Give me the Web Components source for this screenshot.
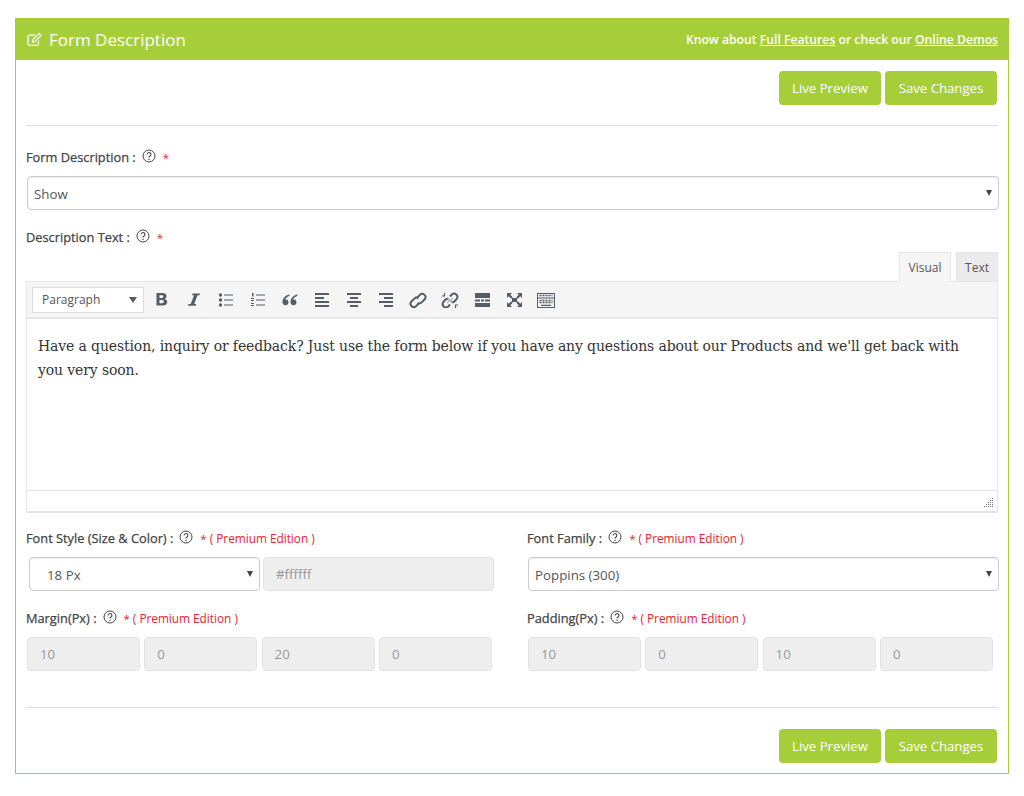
<!DOCTYPE html>
<html>
<head>
<meta charset="utf-8">
<title>Form Description</title>
<style>
  body { margin: 18px 15px 0; background: #fff; font-family: "Open Sans", sans-serif; }
</style>
</head>
<body>
<form-panel>
  <svg slot="icon" width="15" height="15" viewBox="0 0 15 15" fill="none" stroke="#fff" stroke-width="1.3"><path d="M11.500 8.500v3.200a1.600 1.600 0 0 1-1.600 1.600H2.600A1.600 1.600 0 0 1 1 11.700V4.800a1.600 1.600 0 0 1 1.600-1.600H8"/><path d="M5.500 10.200l.5-2.600L12 1.600l2 2-6 6z" stroke-width="1.100"/></svg>
  <span slot="title">Form Description</span>
  <span slot="links">Know about <a>Full Features</a> or check our <a>Online Demos</a></span>

  <action-bar></action-bar>
  <hr-line style="margin-top:20px"></hr-line>

  <field-label style="margin-top:22px" required>Form Description :</field-label>
  <select-box style="margin:10px -1px 0 1px;height:34px" value="Show"></select-box>

  <field-label style="margin-top:18px" required>Description Text :</field-label>
  <wp-editor style="margin-top:6px">Have a question, inquiry or feedback? Just use the form below if you have any questions about our Products and we'll get back with you very soon.</wp-editor>

  <two-cols style="margin-top:16px">
    <div slot="left">
      <field-label required premium>Font Style (Size &amp; Color) :</field-label>
      <input-row style="margin:10px 0 0 3px;grid-template-columns:231px 231px;column-gap:3px">
        <select-box value="18 Px" indent="17"></select-box>
        <text-box value="#ffffff"></text-box>
      </input-row>
      <field-label style="margin-top:18px" required premium>Margin(Px) :</field-label>
      <input-row style="margin:10px 0 0 1px;grid-template-columns:repeat(4, 113px)">
        <text-box value="10"></text-box><text-box value="0"></text-box><text-box value="20"></text-box><text-box value="0"></text-box>
      </input-row>
    </div>
    <div slot="right">
      <field-label required premium>Font Family :</field-label>
      <input-row style="margin:10px -1px 0 1px;grid-template-columns:1fr">
        <select-box value="Poppins (300)"></select-box>
      </input-row>
      <field-label style="margin-top:18px" required premium>Padding(Px) :</field-label>
      <input-row style="margin:10px 0 0 1px;grid-template-columns:repeat(4, 113px)">
        <text-box value="10"></text-box><text-box value="0"></text-box><text-box value="10"></text-box><text-box value="0"></text-box>
      </input-row>
    </div>
  </two-cols>

  <hr-line style="margin-top:36px"></hr-line>
  <action-bar style="margin-top:21px"></action-bar>
</form-panel>

<script>
class FormPanel extends HTMLElement {
  constructor() {
    super();
    this.attachShadow({ mode: 'open' });
    this.shadowRoot.innerHTML = `
      <style>
        :host { display: block; width: 994px; box-sizing: border-box; border: 1px solid #a6ce39; border-top: 0; height: 756px; color: #444; }
        header { height: 42px; margin: 0 -1px; background: #a6ce39; color: #fff; display: flex; align-items: center; padding: 0 11px 0 12px; }
        .icon { display: flex; margin-right: 7px; }
        .title { font-size: 17px; flex: 1; }
        .links { font-size: 12.2px; font-weight: 600; }
        ::slotted(span[slot="links"]) { display: block; }
        main { padding: 11px 10px 0; }
      </style>
      <header>
        <span class="icon"><slot name="icon"></slot></span>
        <span class="title"><slot name="title"></slot></span>
        <span class="links"><slot name="links"></slot></span>
      </header>
      <main><slot></slot></main>`;
  }
}

class ActionBar extends HTMLElement {
  constructor() {
    super();
    this.attachShadow({ mode: 'open' });
    this.shadowRoot.innerHTML = `
      <style>
        :host { display: flex; justify-content: flex-end; gap: 4px; padding-right: 1px; }
        button { height: 34px; border: 0; border-radius: 4px; background: #a6ce39; color: #fff; font: 13.2px "Open Sans", sans-serif; padding: 0; }
        .preview { width: 102px; }
        .save { width: 112px; }
      </style>
      <button class="preview">Live Preview</button>
      <button class="save">Save Changes</button>`;
  }
}

class HrLine extends HTMLElement {
  constructor() {
    super();
    this.attachShadow({ mode: 'open' });
    this.shadowRoot.innerHTML = `<style>:host { display: block; height: 1px; background: #ddd; }</style>`;
  }
}

class FieldLabel extends HTMLElement {
  constructor() {
    super();
    this.attachShadow({ mode: 'open' });
    const star = this.hasAttribute('required') ? '<span class="star">*</span>' : '';
    const premium = this.hasAttribute('premium') ? '<span class="premium">( Premium Edition )</span>' : '';
    this.shadowRoot.innerHTML = `
      <style>
        :host { display: flex; align-items: center; height: 18px; font-size: 12.8px; color: #444; white-space: nowrap; }
        .text { -webkit-text-stroke: .25px #444; }
        svg { margin: -2px 0 0 6px; }
        .star { color: #e8212e; margin-left: 7px; font-size: 11.5px; }
        .premium { color: #e8212e; margin-left: 3px; font-size: 11.8px; }
      </style>
      <span class="text"><slot></slot></span>
      <svg width="14" height="14" viewBox="0 0 14 14" fill="none" stroke="#444"><circle cx="7" cy="7" r="6"/><path d="M5.100 5.500a1.900 1.900 0 1 1 2.900 1.600c-.7.4-1 .7-1 1.500" stroke-width="1.100"/><path d="M7 9.700v1.200" stroke-width="1.200"/></svg>
      ${star}${premium}`;
  }
}

class SelectBox extends HTMLElement {
  constructor() {
    super();
    this.attachShadow({ mode: 'open' });
    const indent = this.getAttribute('indent') || 6;
    this.shadowRoot.innerHTML = `
      <style>
        :host { display: flex; align-items: center; box-sizing: border-box; height: 34px; background: #fff; border: 1px solid #ccc; border-radius: 4px; box-shadow: inset 0 1px 1px rgba(0,0,0,.075); font-size: 13.3px; color: #555; }
        .val { padding: 1px 0 0 ${indent}px; flex: 1; }
        i { width: 0; height: 0; border: 3.500px solid transparent; border-top: 6px solid #444; border-bottom: 0; margin-right: 6px; }
      </style>
      <span class="val">${this.getAttribute('value')}</span><i></i>`;
  }
}

class TextBox extends HTMLElement {
  constructor() {
    super();
    this.attachShadow({ mode: 'open' });
    this.shadowRoot.innerHTML = `
      <style>
        :host { display: flex; align-items: center; box-sizing: border-box; height: 34px; background: #eee; border: 1px solid #e3e3e3; border-radius: 4px; font-size: 13.3px; color: #999; padding-left: 12px; }
      </style>
      ${this.getAttribute('value')}`;
  }
}

class InputRow extends HTMLElement {
  constructor() {
    super();
    this.attachShadow({ mode: 'open' });
    this.shadowRoot.innerHTML = `<style>:host { display: grid; column-gap: 4.300px; }</style><slot></slot>`;
  }
}

class TwoCols extends HTMLElement {
  constructor() {
    super();
    this.attachShadow({ mode: 'open' });
    this.shadowRoot.innerHTML = `
      <style>
        :host { display: grid; grid-template-columns: 501px 471px; }
      </style>
      <slot name="left"></slot><slot name="right"></slot>`;
  }
}

const C = '#555d66';
const ICONS = [
  ['B', 16, `<path d="M2.500 1h6c2.600 0 4 1.200 4 3.200 0 1.300-.7 2.300-1.900 2.700 1.600.3 2.600 1.500 2.600 3.100 0 2.300-1.600 3.500-4.200 3.500H2.500zM5.500 3.300v2.700h2.300c1 0 1.500-.5 1.500-1.400 0-.8-.5-1.300-1.500-1.300zM5.500 8.100v3.100h2.600c1.100 0 1.700-.5 1.700-1.600 0-1-.6-1.500-1.700-1.500z" fill="${C}" fill-rule="evenodd"/>`],
  ['I', 16, `<path d="M6.500 1.500h7.500l-.5 1.800h-2L8.200 12h2l-.5 1.800H2l.5-1.800h2.200l3.300-8.700H6z" fill="${C}"/>`],
  ['ul', 16, `<g fill="${C}"><circle cx="2.500" cy="3" r="1.700"/><circle cx="2.500" cy="8" r="1.700"/><circle cx="2.500" cy="13" r="1.700"/></g><path d="M6 3h9M6 8h9M6 13h9" stroke="${C}"/>`],
  ['ol', 16, `<g fill="${C}"><rect x="2" y="1" width="1.500" height="3.500"/><rect x="1" y="6" width="3" height="1"/><rect x="1" y="8" width="3" height="1"/><rect x="1" y="11" width="3" height="1"/><rect x="1" y="13" width="3" height="1"/></g><path d="M6 3h9M6 8h9M6 13h9" stroke="${C}"/>`],
  ['quote', 16, `<path d="M7.500 2.200C4 3.200.5 5.800.5 9.800c0 2 1.100 3.400 3 3.400 1.700 0 3-1.200 3-3 0-1.600-1.100-2.800-2.700-2.800-.3 0-.5 0-.7.1.4-1.500 2.200-3 4.400-3.800zM15.500 2.200c-3.500 1-7 3.600-7 7.600 0 2 1.100 3.400 3 3.400 1.700 0 3-1.200 3-3 0-1.600-1.100-2.800-2.700-2.800-.3 0-.5 0-.7.1.4-1.500 2.200-3 4.400-3.800z" fill="${C}"/>`],
  ['left', 16, `<path d="M1 1h14v2H1zM1 5h9v2H1zM1 9h14v2H1zM1 13h14v2H1z" fill="${C}"/>`],
  ['center', 16, `<path d="M1 1h14v2H1zM4 5h8v2H4zM1 9h14v2H1zM4 13h8v2H4z" fill="${C}"/>`],
  ['right', 16, `<path d="M1 1h14v2H1zM6 5h9v2H6zM1 9h14v2H1zM6 13h9v2H6z" fill="${C}"/>`],
  ['link', 18, `<g fill="none" stroke="${C}" stroke-width="2"><path d="M8 6l3-3.300a3.300 3.300 0 0 1 4.700 4.600l-3 3.100a3.300 3.300 0 0 1-4 .5"/><path d="M10 11l-3 3.300a3.300 3.300 0 0 1-4.700-4.600l3-3.100a3.300 3.300 0 0 1 4-.5"/></g>`],
  ['unlink', 18, `<g fill="none" stroke="${C}" stroke-width="2"><path d="M9 4.500l1.800-2a3.300 3.300 0 0 1 4.800 4.500l-2 2.300a3.300 3.300 0 0 1-3 1"/><path d="M9 12.500l-1.800 2a3.300 3.300 0 0 1-4.800-4.500l2-2.300a3.300 3.300 0 0 1 3-1"/><path d="M3.500 1v3M1 4h3M14.500 16v-3M17 13h-3" stroke-width="1.200"/><path d="M6 6l6 5M6 11l6-5" stroke="#8a9097" stroke-width="1"/></g>`],
  ['more', 17, `<path d="M1 1h15v5H1zM1 7.500h5v2H1zM7 7.500h3v2H7zM11 7.500h5v2h-5zM1 11h15v4H1z" fill="${C}"/>`],
  ['full', 17, `<path d="M1 1h5L4.300 2.700l2.500 2.500-1.600 1.600-2.500-2.500L1 6zM16 1v5l-1.700-1.700-2.500 2.500-1.600-1.600 2.500-2.500L11 1zM1 15v-5l1.700 1.700 2.500-2.500 1.600 1.600-2.500 2.500L6 15zM16 15h-5l1.700-1.700-2.500-2.500 1.600-1.600 2.500 2.500L16 10z" fill="${C}"/><rect x="6" y="6" width="5" height="4" fill="${C}"/>`],
  ['kitchen', 19, `<rect x=".5" y="1.500" width="17" height="14" fill="none" stroke="${C}"/><path d="M2.500 3.500h13M2.500 8.500h13M2.500 10.500h13" stroke="${C}" stroke-width="1.500" stroke-dasharray="2 1"/><path d="M.5 6h17M4 13.300h10" stroke="${C}" stroke-width="1.200"/>`]
];

class WpEditor extends HTMLElement {
  constructor() {
    super();
    this.attachShadow({ mode: 'open' });
    const buttons = ICONS.map(([name, wide, body]) =>
      `<span class="btn"><svg width="${wide}" height="16" viewBox="0 0 ${wide} 16">${body}</svg></span>`
    ).join('');
    this.shadowRoot.innerHTML = `
      <style>
        :host { display: block; font-family: "Open Sans", sans-serif; }
        .tabs { display: flex; justify-content: flex-end; gap: 5px; height: 29px; }
        .tab { box-sizing: border-box; height: 29px; display: flex; align-items: center; justify-content: center; font-size: 12px; color: #555; border: 1px solid #e5e5e5; border-bottom: 0; }
        .visual { width: 52px; background: #f5f5f5; margin-bottom: -1px; position: relative; z-index: 1; height: 30px; }
        .text { width: 42px; background: #ebebeb; }
        .box { border: 1px solid #e5e5e5; border-width: 1px 1px 2px 1px; }
        .toolbar { display: flex; align-items: center; background: #f5f5f5; border-bottom: 2px solid #e5e5e5; box-sizing: border-box; height: 37px; padding-left: 5px; }
        .format { box-sizing: border-box; width: 112px; height: 26px; background: #fff; border: 1px solid #ddd; display: flex; align-items: center; justify-content: space-between; padding: 0 6px 0 9px; font-size: 12px; color: #555; margin-right: 2px; }
        .format i { width: 0; height: 0; border: 4px solid transparent; border-top: 6px solid ${C}; border-bottom: 0; }
        .btn { width: 32px; display: flex; justify-content: center; }
        .content { box-sizing: border-box; height: 171px; background: #fff; padding: 15px 20px 15px 11px; font: 14px/24px "DejaVu Serif", serif; letter-spacing: -.13px; color: #333; }
        .status { height: 20px; border-top: 1px solid #e5e5e5; position: relative; }
        .status svg { position: absolute; right: 3px; bottom: 3px; }
      </style>
      <div class="tabs"><span class="tab visual">Visual</span><span class="tab text">Text</span></div>
      <div class="box">
        <div class="toolbar"><span class="format">Paragraph<i></i></span>${buttons}</div>
        <div class="content"><slot></slot></div>
        <div class="status"><svg width="10" height="10" viewBox="0 0 10 10" fill="#777"><path d="M8 0h1v1H8zM8 2h1v1H8zM6 2h1v1H6zM8 4h1v1H8zM6 4h1v1H6zM4 4h1v1H4zM8 6h1v1H8zM6 6h1v1H6zM4 6h1v1H4zM2 6h1v1H2zM8 8h1v1H8zM6 8h1v1H6zM4 8h1v1H4zM2 8h1v1H2zM0 8h1v1H0z"/></svg></div>
      </div>`;
  }
}

customElements.define('form-panel', FormPanel);
customElements.define('action-bar', ActionBar);
customElements.define('hr-line', HrLine);
customElements.define('field-label', FieldLabel);
customElements.define('select-box', SelectBox);
customElements.define('text-box', TextBox);
customElements.define('input-row', InputRow);
customElements.define('two-cols', TwoCols);
customElements.define('wp-editor', WpEditor);
</script>
<style>
  form-panel a { color: #fff; text-decoration: underline; }
</style>
</body>
</html>
